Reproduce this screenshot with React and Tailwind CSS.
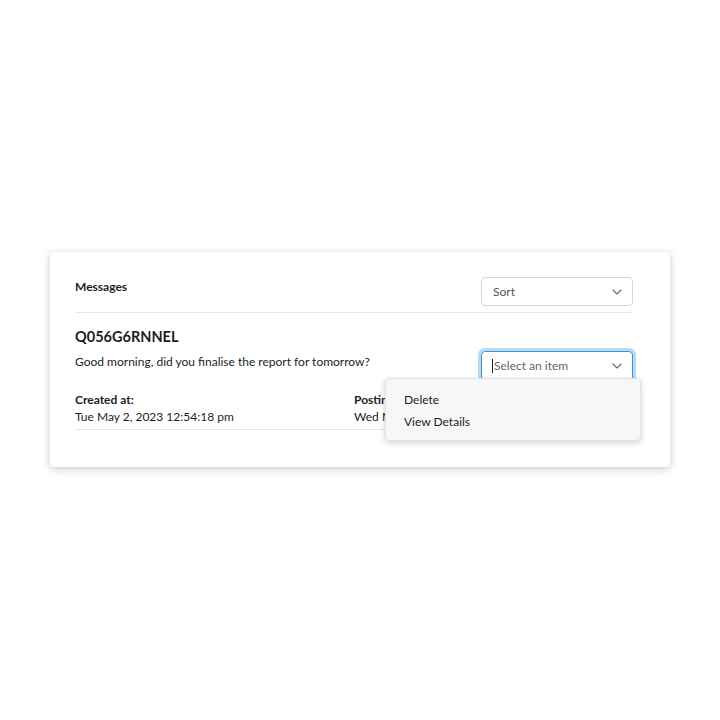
import React from 'react';

const Chevron = () => (
  <svg width="10" height="6" viewBox="0 0 10 6" fill="none" className="text-[#666]">
    <path d="M1 1l4 4 4-4" stroke="currentColor" strokeWidth="1.1" strokeLinecap="round" strokeLinejoin="round" />
  </svg>
);

const App = () => (
  <div className="w-[720px] h-[720px] bg-white pt-[252px] px-[50px]" style={{ fontFamily: 'Lato, "Noto Sans", sans-serif' }}>
    <div className="bg-white rounded-[4px] shadow-[0_2px_8px_rgba(0,0,0,0.22)] pl-[25px] pr-[37px] pt-[25px] pb-[37px] text-[#1d1d1d]">
      <div className="flex items-start justify-between border-b border-[#e6e6e6] pb-[6px]">
        <div className="text-[12px] leading-[17px] font-bold mt-[1px]">Messages</div>
        <div className="w-[152px] h-[29px] border border-[#d4d4d4] rounded-[4px] flex items-center justify-between pl-[11px] pr-[10px] text-[12px] text-[#555]">
          <span>Sort</span>
          <Chevron />
        </div>
      </div>

      <div className="relative">
        <div className="flex items-start justify-between pt-[14px]">
          <div>
            <div className="text-[14.5px] font-bold leading-[20px]">Q056G6RNNEL</div>
            <div className="text-[12px] leading-[17px] mt-[6px]">Good morning, did you finalise the report for tomorrow?</div>
          </div>
          <div className="mt-[24px] w-[152px] h-[30px] border border-[#4a8fcc] rounded-[4px] ring-[3px] ring-[#b4dbf5] flex items-center justify-between pl-[10px] pr-[10px] text-[12px] text-[#666]">
            <span className="flex items-center"><span className="w-[1px] h-[14px] bg-[#222] mr-[1px]"></span>Select an item</span>
            <Chevron />
          </div>
        </div>

        <div className="grid grid-cols-2 border-b border-[#e6e6e6] pb-[4px] mt-[10px] text-[12px] leading-[17px]">
          <div>
            <div className="font-bold">Created at:</div>
            <div>Tue May 2, 2023 12:54:18 pm</div>
          </div>
          <div>
            <div className="font-bold">Posting date:</div>
            <div>Wed May 3, 2023 09:00:00 am</div>
          </div>
        </div>

        <div className="absolute left-[310px] top-[65px] w-[256px] h-[63px] bg-[#f7f7f7] rounded-[4px] border border-[#e2e2e2] shadow-[0_2px_6px_rgba(0,0,0,0.18)] pl-[18px] pt-[10px] text-[12px] leading-[22px]">
          <div>Delete</div>
          <div>View Details</div>
        </div>
      </div>
    </div>
  </div>
);

export default App;
